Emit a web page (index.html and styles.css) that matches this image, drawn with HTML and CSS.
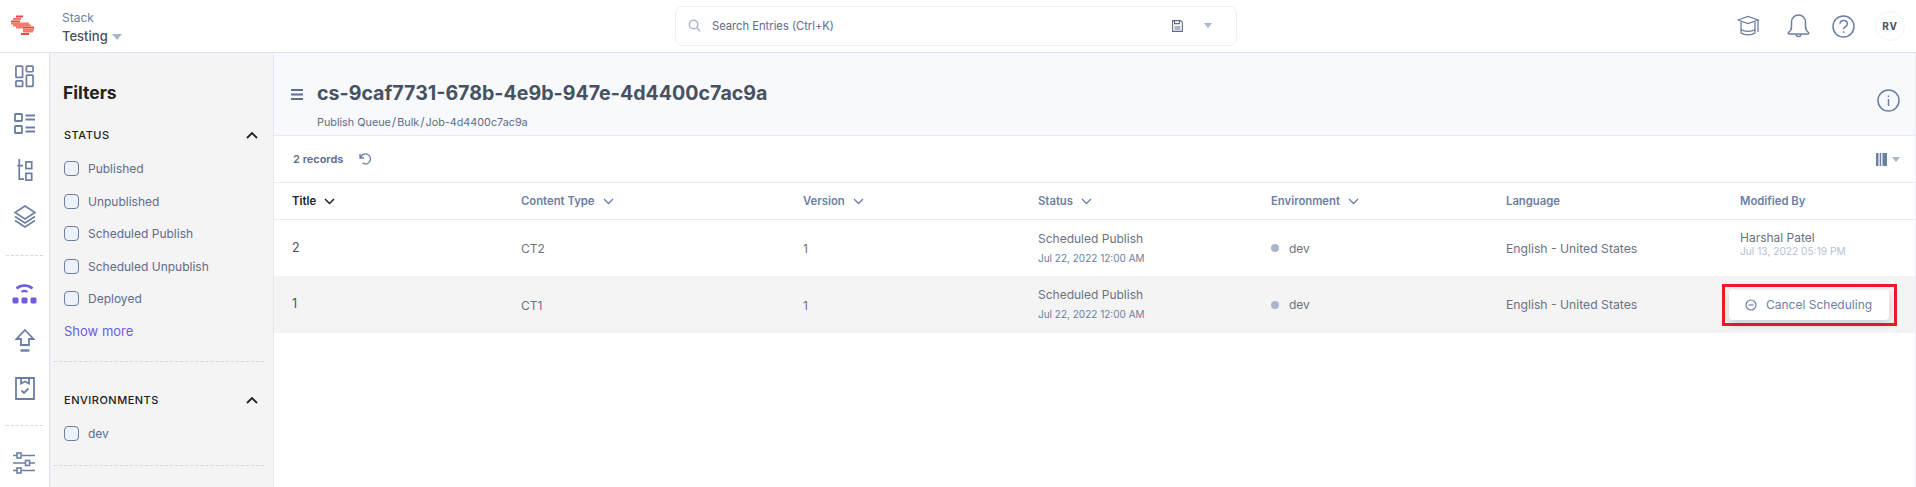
FILE: index.html
```html
<!DOCTYPE html>
<html lang="en">
<head>
<meta charset="utf-8">
<title>Publish Queue</title>
<link rel="stylesheet" href="styles.css">
</head>
<body>
<header class="topbar">
  <div class="logo-cell">
    <svg class="logo" width="24" height="24" viewBox="11 14 24 24" fill="none" stroke-width="2">
      <g stroke="#f0483e"><path d="M16 16.500h7M11 21.500h9M23 27.500h11M21 34h8"/></g>
      <g stroke="#f47a70"><path d="M13 19h8M11 23.500h10M13 25.500h9M21 23.500h8M22 25.500h9M16 27.500h7M23 29.500h11M23 31.500h10"/></g>
    </svg>
  </div>
  <div class="stack">
    <div class="stack-label">Stack</div>
    <div class="stack-name">Testing <span class="caret"></span></div>
  </div>
  <div class="search">
    <svg width="13" height="13" viewBox="0 0 14 14" fill="none" stroke="#a9b6cb" stroke-width="1.600"><circle cx="6" cy="6" r="4.600"/><path d="M9.500 9.500l3.600 3.600"/></svg>
    <span class="search-text">Search Entries (Ctrl+K)</span>
    <svg class="save" width="11" height="12" viewBox="0 0 11 12" fill="none" stroke="#5d6c8b" stroke-width="1.100"><path d="M.6.6h8l1.800 1.800v9H.6z"/><path d="M2.500 .6v3h5v-3M2.500 7h6M2.500 9h6"/></svg>
    <span class="caret small"></span>
  </div>
  <div class="top-icons">
    <svg width="24" height="22" viewBox="0 0 24 22" fill="none" stroke="#6c7fa3" stroke-width="1.300"><path d="M1 5l10-3.600L21 5l-10 3.600z"/><path d="M4 7v11c3 2.400 11 2.400 14 0V7M4 14.500c3 2.400 11 2.400 14 0M21 5v12"/></svg>
    <svg class="bell" width="23" height="24" viewBox="0 0 23 24" fill="none" stroke="#6c7fa3" stroke-width="1.500"><path d="M1.500 18.500c2-1.400 3-2.500 3-6V8a7 7 0 0 1 14 0v4.500c0 3.500 1 4.600 3 6 .6.700.2 1.500-.6 1.500H2.100c-.8 0-1.200-.8-.6-1.500z"/><path d="M9 20.500c.2 2.600 4.800 2.600 5 0"/></svg>
    <svg class="help" width="23" height="23" viewBox="0 0 23 23" fill="none" stroke="#6c7fa3" stroke-width="1.500"><circle cx="11.500" cy="11.500" r="10.500"/><path d="M8 8.800c.3-4.400 7.300-4.200 7.300.1 0 2.600-3.600 2.700-3.600 5.300"/><path d="M11.700 16.200v1.800"/></svg>
    <div class="avatar">RV</div>
  </div>
</header>
<div class="body">
  <nav class="rail">
    <svg class="r1" width="19" height="23" viewBox="0 0 20 24" fill="none" stroke="#6c7fa3" stroke-width="1.800"><rect x="1" y="1" width="7" height="12" rx=".8"/><rect x="12" y="1" width="7" height="6" rx=".8"/><rect x="1" y="16.500" width="7" height="6" rx=".8"/><rect x="12" y="10.500" width="7" height="12" rx=".8"/></svg>
    <svg class="r2" width="21" height="21" viewBox="0 0 21 21" fill="none" stroke="#6c7fa3" stroke-width="1.800"><rect x="1" y="1" width="7" height="7" rx=".6"/><rect x="1" y="13" width="7" height="7" rx=".6"/><path d="M11.500 2.500H21M11.500 6.500H21M11.500 14.500H21M11.500 18.500H21"/></svg>
    <svg class="r3" width="16" height="23" viewBox="0 0 16 24" fill="none" stroke="#6c7fa3" stroke-width="1.800"><path d="M2 0v21h5M0 7h6"/><rect x="9" y="3" width="6" height="7"/><rect x="9" y="15" width="6" height="7"/></svg>
    <svg class="r4" width="22" height="24" viewBox="0 0 22 24" fill="none" stroke="#6c7fa3" stroke-width="1.600"><path d="M11 1l10 6.500L11 14 1 7.500z"/><path d="M1 11.500L11 18l10-6.500M1 15.500L11 22l10-6.500"/></svg>
    <div class="rail-sep"></div>
    <div class="rail-active">
      <svg width="25" height="21" viewBox="0 0 25 21" fill="none"><path d="M4.500 5.500c4.500-4 11.500-4 16 0" stroke="#6c5ce7" stroke-width="2.400"/><path d="M9.500 9c2-1.500 4-1.500 6 0" stroke="#6c5ce7" stroke-width="2"/><rect x=".5" y="14.500" width="6" height="6" rx="1.400" fill="#6c5ce7"/><rect x="9.500" y="14.500" width="6" height="6" rx="1.400" fill="#6c5ce7"/><rect x="18.500" y="14.500" width="6" height="6" rx="1.400" fill="#6c5ce7"/></svg>
    </div>
    <svg class="r-pub" width="20" height="23" viewBox="0 0 20 23" fill="none" stroke="#6c7fa3" stroke-width="1.800"><path d="M10 1l8.500 9H14v6H6v-6H1.500z"/><path d="M5.500 21.500h9" stroke-width="2.400"/></svg>
    <svg class="r-task" width="20" height="24" viewBox="0 0 20 24" fill="none" stroke="#6c7fa3" stroke-width="1.800"><path d="M1 2h18v21H1z"/><path d="M6 2v5.500l4-2 4 2V2"/><path d="M6.500 14.500l2.500 2.500 4.500-4.500"/></svg>
    <div class="rail-sep second"></div>
    <svg class="r-last" width="23" height="22" viewBox="0 0 23 22" fill="none" stroke="#6c7fa3" stroke-width="1.600"><path d="M0 3.500h4M9 3.500h13M0 11h12M17 11h5M0 18.500h4M9 18.500h13"/><rect x="4" y="1" width="4" height="5"/><rect x="12.500" y="8.500" width="4" height="5"/><rect x="4" y="16" width="4" height="5"/></svg>
  </nav>
  <aside class="filters">
    <h2 class="filters-title">Filters</h2>
    <section class="group">
      <div class="group-head"><span>STATUS</span><svg width="12" height="8" viewBox="0 0 12 8" fill="none" stroke="#222" stroke-width="1.800"><path d="M1 7l5-5 5 5"/></svg></div>
      <label class="check"><span class="box"></span>Published</label>
      <label class="check"><span class="box"></span>Unpublished</label>
      <label class="check"><span class="box"></span>Scheduled Publish</label>
      <label class="check"><span class="box"></span>Scheduled Unpublish</label>
      <label class="check"><span class="box"></span>Deployed</label>
      <a class="more">Show more</a>
    </section>
    <section class="group env">
      <div class="group-head"><span>ENVIRONMENTS</span><svg width="12" height="8" viewBox="0 0 12 8" fill="none" stroke="#222" stroke-width="1.800"><path d="M1 7l5-5 5 5"/></svg></div>
      <label class="check"><span class="box"></span>dev</label>
    </section>
  </aside>
  <main class="main">
    <div class="page-head">
      <svg class="menu" width="12" height="11" viewBox="0 0 12 11" fill="none" stroke="#5d6c8b" stroke-width="1.800"><path d="M0 1h12M0 5.500h12M0 10h12"/></svg>
      <div class="page-titles">
        <h1>cs-9caf7731-678b-4e9b-947e-4d4400c7ac9a</h1>
        <div class="crumbs">Publish Queue<i>/</i>Bulk<i>/</i>Job-4d4400c7ac9a</div>
      </div>
      <svg class="info" width="23" height="23" viewBox="0 0 23 23" fill="none" stroke="#6c7fa3" stroke-width="1.500"><circle cx="11.500" cy="11.500" r="10.500"/><path d="M11.500 10v7M11.500 6.500v1.600"/></svg>
    </div>
    <div class="records">
      <b>2 records</b>
      <svg width="13" height="12" viewBox="0 0 13 12" fill="none" stroke="#6c7fa3" stroke-width="1.300"><path d="M1.500 5a5 5 0 1 1 2 5M1 1v4h4"/></svg>
      <div class="cols">
        <svg width="11" height="13" viewBox="0 0 11 13" fill="#6c7fa3"><rect width="2.500" height="13"/><rect x="3.700" width="1.500" height="13"/><rect x="6.500" width="4.500" height="13"/></svg>
        <span class="caret small"></span>
      </div>
    </div>
    <div class="table">
      <div class="row head">
        <div class="active-col">Title <svg class="chev" width="11" height="7" viewBox="0 0 11 7" fill="none" stroke="#222" stroke-width="1.500"><path d="M1 1l4.500 4.500L10 1"/></svg></div>
        <div>Content Type <svg class="chev" width="11" height="7" viewBox="0 0 11 7" fill="none" stroke="#6c7fa3" stroke-width="1.300"><path d="M1 1l4.500 4.500L10 1"/></svg></div>
        <div>Version <svg class="chev" width="11" height="7" viewBox="0 0 11 7" fill="none" stroke="#6c7fa3" stroke-width="1.300"><path d="M1 1l4.500 4.500L10 1"/></svg></div>
        <div>Status <svg class="chev" width="11" height="7" viewBox="0 0 11 7" fill="none" stroke="#6c7fa3" stroke-width="1.300"><path d="M1 1l4.500 4.500L10 1"/></svg></div>
        <div>Environment <svg class="chev" width="11" height="7" viewBox="0 0 11 7" fill="none" stroke="#6c7fa3" stroke-width="1.300"><path d="M1 1l4.500 4.500L10 1"/></svg></div>
        <div>Language</div>
        <div>Modified By</div>
      </div>
      <div class="row item">
        <div class="title">2</div>
        <div class="drop">CT2</div>
        <div class="drop">1</div>
        <div class="stat">Scheduled Publish<small>Jul 22, 2022 12:00 AM</small></div>
        <div><span class="dot"></span>dev</div>
        <div class="lang">English - United States</div>
        <div class="mod">Harshal Patel<small>Jul 13, 2022 05:19 PM</small></div>
      </div>
      <div class="row item hover">
        <div class="title">1</div>
        <div class="drop">CT1</div>
        <div class="drop">1</div>
        <div class="stat">Scheduled Publish<small>Jul 22, 2022 12:00 AM</small></div>
        <div><span class="dot"></span>dev</div>
        <div class="lang">English - United States</div>
        <div class="act">
          <div class="highlight">
            <button class="cancel"><svg width="12" height="12" viewBox="0 0 12 12" fill="none" stroke="#6c7fa3" stroke-width="1.200"><circle cx="6" cy="6" r="5"/><path d="M3.500 6h5"/></svg>Cancel Scheduling</button>
          </div>
        </div>
      </div>
    </div>
  </main>
</div>
</body>
</html>
```
FILE: styles.css
```css
* { box-sizing: border-box; }
html, body { margin: 0; height: 100%; overflow: hidden; }
body { font-family: Inter, "Liberation Sans", sans-serif; color: #475161; background: #fff; width: 1916px; height: 487px; display: flex; flex-direction: column; }
.topbar { height: 53px; border-bottom: 1px solid #dde3ee; display: flex; align-items: center; flex: none; position: relative; }
.logo-cell { width: 62px; flex: none; display: flex; padding-left: 11px; }
.stack { width: 613px; flex: none; padding-top: 3px; }
.stack-label { font-size: 12px; line-height: 16px; color: #6c7fa3; }
.stack-name { font-size: 13px; line-height: 20px; font-weight: 500; color: #475161; display: flex; align-items: center; gap: 4px; }
.caret { display: inline-block; width: 0; height: 0; border-left: 5px solid transparent; border-right: 5px solid transparent; border-top: 6px solid #a9b6cb; margin-top: 2px; }
.caret.small { border-left-width: 4px; border-right-width: 4px; border-top-width: 5px; margin: 0; }
.search { width: 562px; height: 40px; border: 1px solid #edf0f6; border-radius: 8px; display: flex; align-items: center; padding: 0 24px 0 12px; flex: none; margin-top: -1px; }
.search-text { font-size: 11.200px; color: #5d6c8b; margin-left: 11px; flex: 1; }
.save { margin-right: 21px; }
.top-icons { flex: 1; display: flex; align-items: center; justify-content: flex-end; padding-right: 11px; gap: 0; }
.bell { margin-left: 26px; }
.help { margin-left: 22px; }
.avatar { width: 30px; height: 30px; border: 1px solid #f3f4f7; border-radius: 50%; margin-left: 20px; font-size: 10px; font-weight: 700; letter-spacing: .8px; color: #475161; display: flex; align-items: center; justify-content: center; }
.body { flex: 1; display: flex; min-height: 0; }
.rail { width: 49px; flex: none; display: flex; flex-direction: column; align-items: center; padding-top: 12px; }
.rail svg { flex: none; }
.r2 { margin-top: 25px; }
.r3 { margin-top: 25px; }
.r4 { margin-top: 23px; }
.rail-sep { width: 37px; border-top: 1px dashed #d3d8e0; margin-top: 26px; flex: none; }
.rail-active { align-self: stretch; height: 38px; margin-top: 18px; border-right: 1px solid #6c5ce7; margin-right: -1px; display: flex; align-items: center; justify-content: center; flex: none; }
.r-pub { margin-top: 17px; }
.r-task { margin-top: 24px; }
.rail-sep.second { margin-top: 25px; }
.r-last { margin-top: 26px; }
.filters { width: 225px; flex: none; background: #f4f4f4; border-left: 1px solid #dde3ee; border-right: 1px solid #e4e8f0; padding: 29px 9px 0 4px; display: flex; flex-direction: column; }
.filters-title { margin: 0 0 0 9px; font-size: 17.500px; line-height: 22px; font-weight: 700; color: #222; }
.group { border-bottom: 1px dashed #d3d8e0; padding-bottom: 21px; }
.group-head { display: flex; align-items: center; justify-content: space-between; font-size: 11px; line-height: 16px; font-weight: 500; letter-spacing: .5px; color: #222; padding: 0 6px 0 10px; margin-top: 23px; margin-bottom: 17px; }
.env .group-head { margin-top: 30px; margin-bottom: 17px; }
.check { display: flex; align-items: center; font-size: 12px; line-height: 17px; color: #5d6c8b; margin-left: 10px; margin-bottom: 15.500px; }
.group.env { padding-bottom: 8px; }
.box { width: 15px; height: 15px; border: 1px solid #6c7fa3; border-radius: 4px; background: #edf1f9; margin-right: 9px; flex: none; }
.more { display: block; font-size: 13px; line-height: 18px; color: #6c5ce7; margin-left: 10px; margin-top: -1px; }
.main { flex: 1; min-width: 0; display: flex; flex-direction: column; border-right: 1px solid #edf0f6; }
.page-head { height: 83px; background: #f7f9fc; border-bottom: 1px solid #e8ebf2; display: flex; align-items: flex-start; padding: 0 15px 0 17px; flex: none; }
.menu { margin-top: 36px; flex: none; }
.page-titles { margin-left: 14px; flex: 1; margin-top: 28px; }
h1 { margin: 0; font-size: 19.600px; line-height: 24px; font-weight: 700; color: #475161; }
.crumbs { font-size: 10.800px; line-height: 14px; color: #5d6c8b; margin-top: 10px; }
.crumbs i { font-style: normal; font-size: 12px; margin: 0 1px; }
.info { margin-top: 36px; flex: none; }
.records { height: 47px; display: flex; align-items: center; border-bottom: 1px solid #e8ebf2; padding: 0 15px 0 19px; flex: none; }
.records b { font-size: 11px; font-weight: 600; color: #5d6c8b; margin-right: 16px; }
.cols { margin-left: auto; display: flex; align-items: center; gap: 5px; }
.table { display: flex; flex-direction: column; }
.row { display: grid; grid-template-columns: 229px 282px 235px 233px 235px 234px 1fr; padding-left: 18px; }
.row > div { display: flex; align-items: center; }
.head { height: 37px; border-bottom: 1px solid #e8ebf2; font-size: 11.300px; font-weight: 600; color: #6c7fa3; }
.active-col { color: #222; }
.chev { margin-left: 8px; }
.item { height: 56px; font-size: 12px; color: #6a7280; }
.hover { height: 57px; background: #f4f4f4; }
.title { color: #475161; font-size: 12.500px; margin-top: -2px; }
.drop { padding-top: 1px; }
.lang { font-size: 12.200px; }
.row > .stat, .row > .mod { display: flex; flex-direction: column; align-items: flex-start; justify-content: center; }
.stat { line-height: 15px; margin-top: -1px; }
.stat small { font-size: 10px; line-height: 14px; color: #6c7fa3; margin-top: 5px; }
.mod { line-height: 15px; margin-top: -8px; }
.mod small { font-size: 10.200px; line-height: 13px; color: #b4bfd2; }
.dot { width: 8px; height: 8px; border-radius: 50%; background: #a9b6cb; margin-right: 10px; }
.row > .act { margin-left: -18px; }
.highlight { border: 3px solid #ed1c24; padding: 3px 5px 3px 4px; }
.cancel { display: flex; align-items: center; gap: 9px; height: 30px; width: 160px; padding: 0 0 0 16px; border: 0; border-radius: 4px; background: #fff; box-shadow: 0 4px 10px rgba(0,0,0,.16); font: 12px Inter, sans-serif; color: #6c7fa3; white-space: nowrap; }
```
